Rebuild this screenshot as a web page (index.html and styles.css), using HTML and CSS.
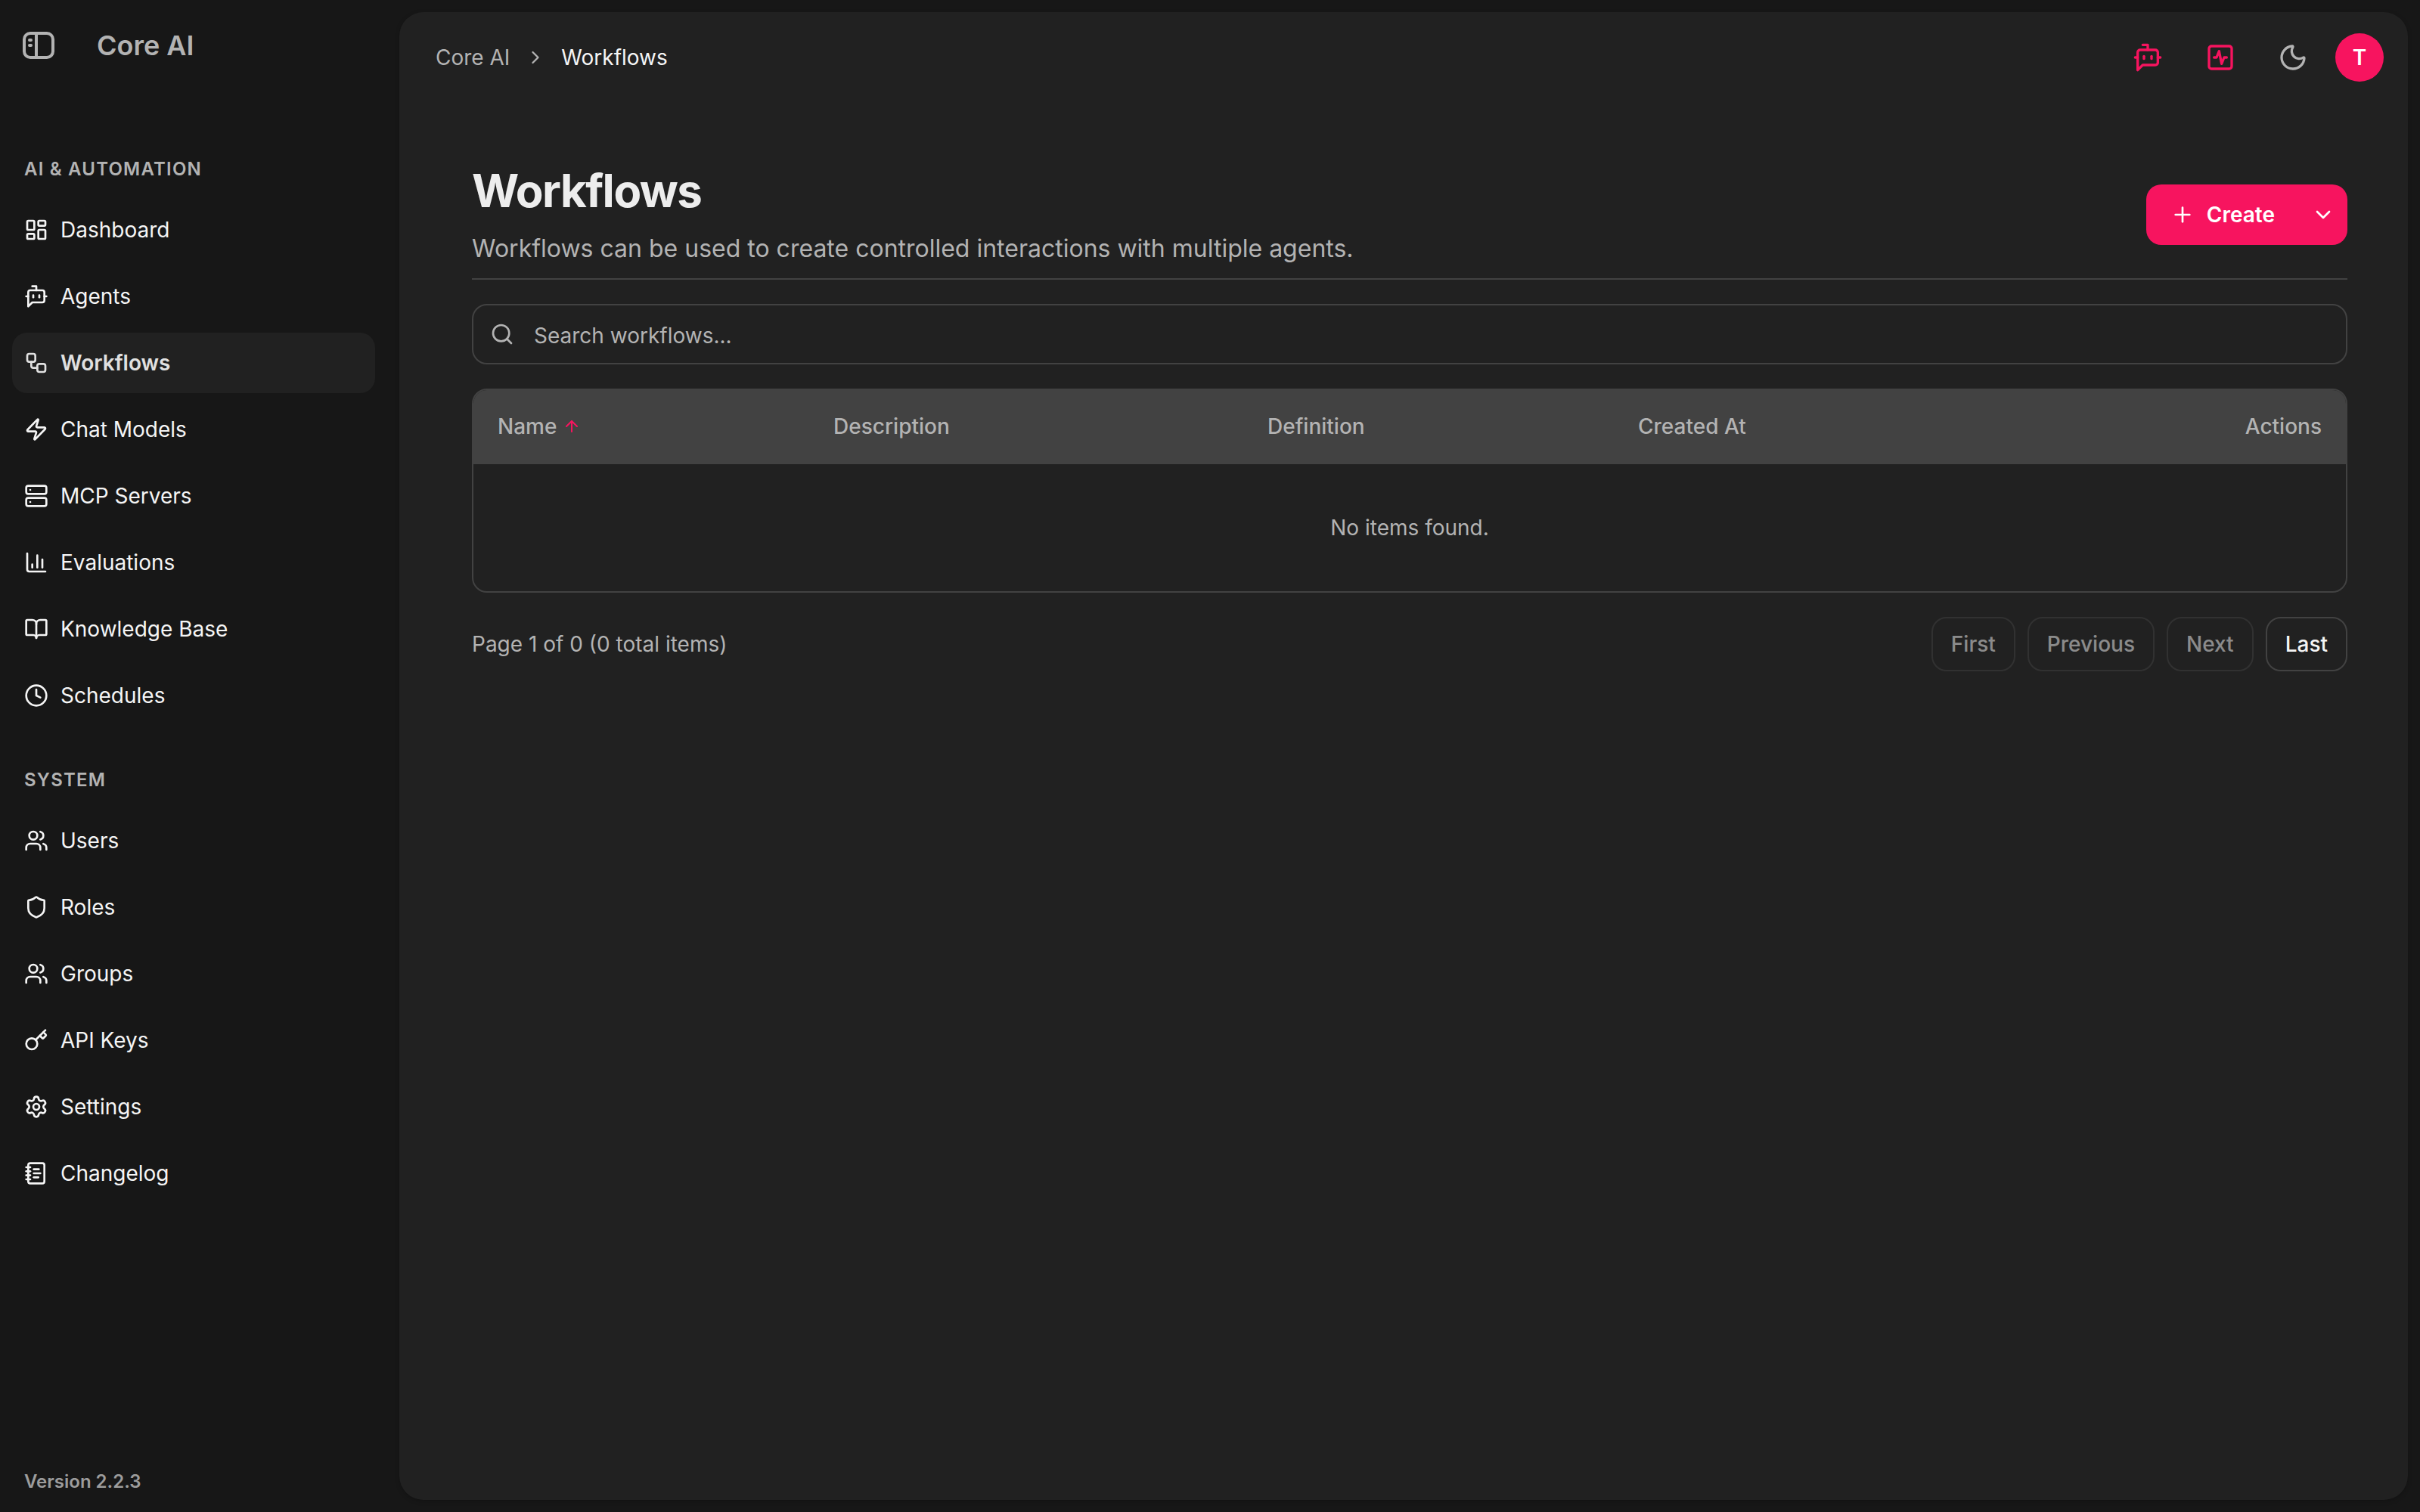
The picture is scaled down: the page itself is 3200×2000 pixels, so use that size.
FILE: index.html
```html
<!DOCTYPE html>
<html lang="en">
<head>
<meta charset="utf-8">
<title>Workflows - Core AI</title>
<link rel="stylesheet" href="styles.css">
</head>
<body>
<div class="app">
  <aside class="sidebar">
    <div class="brand">
      <button class="toggle" type="button" aria-label="Toggle sidebar">
        <svg class="toggle-icon" viewBox="0 0 42 36" fill="none" stroke="currentColor" stroke-width="4"><rect x="2" y="2" width="38" height="32" rx="8"/><path d="M18 2v32"/><path d="M9 11h2M9 18h2" stroke-linecap="round"/></svg>
      </button>
      <span class="brand-name">Core AI</span>
    </div>
    <nav class="nav" aria-label="Main">
      <section class="nav-group">
        <h2 class="nav-label">AI &amp; AUTOMATION</h2>
        <ul class="nav-list">
          <li><a class="nav-item" href="#"><svg class="icon" viewBox="0 0 24 24"><rect width="7" height="9" x="3" y="3" rx="1"/><rect width="7" height="5" x="14" y="3" rx="1"/><rect width="7" height="9" x="14" y="12" rx="1"/><rect width="7" height="5" x="3" y="16" rx="1"/></svg>Dashboard</a></li>
          <li><a class="nav-item" href="#"><svg class="icon" viewBox="0 0 24 24"><path d="M12 6V2H8"/><path d="m8 18-4 4V8a2 2 0 0 1 2-2h12a2 2 0 0 1 2 2v8a2 2 0 0 1-2 2Z"/><path d="M2 12h2"/><path d="M9 11v2"/><path d="M15 11v2"/><path d="M20 12h2"/></svg>Agents</a></li>
          <li><a class="nav-item active" href="#" aria-current="page"><svg class="icon" viewBox="0 0 24 24"><rect width="8" height="8" x="3" y="3" rx="2"/><path d="M7 11v4a2 2 0 0 0 2 2h4"/><rect width="8" height="8" x="13" y="13" rx="2"/></svg>Workflows</a></li>
          <li><a class="nav-item" href="#"><svg class="icon" viewBox="0 0 24 24"><path d="M4 14a1 1 0 0 1-.78-1.63l9.9-10.2a.5.5 0 0 1 .86.46l-1.92 6.02A1 1 0 0 0 13 10h7a1 1 0 0 1 .78 1.63l-9.9 10.2a.5.5 0 0 1-.86-.46l1.92-6.02A1 1 0 0 0 11 14z"/></svg>Chat Models</a></li>
          <li><a class="nav-item" href="#"><svg class="icon" viewBox="0 0 24 24"><rect width="20" height="8" x="2" y="2" rx="2"/><rect width="20" height="8" x="2" y="14" rx="2"/><path d="M6 6h.01"/><path d="M6 18h.01"/></svg>MCP Servers</a></li>
          <li><a class="nav-item" href="#"><svg class="icon" viewBox="0 0 24 24"><path d="M3 3v16a2 2 0 0 0 2 2h16"/><path d="M18 17V9"/><path d="M13 17V5"/><path d="M8 17v-3"/></svg>Evaluations</a></li>
          <li><a class="nav-item" href="#"><svg class="icon" viewBox="0 0 24 24"><path d="M12 7v14"/><path d="M3 18a1 1 0 0 1-1-1V4a1 1 0 0 1 1-1h5a4 4 0 0 1 4 4 4 4 0 0 1 4-4h5a1 1 0 0 1 1 1v13a1 1 0 0 1-1 1h-6a3 3 0 0 0-3 3 3 3 0 0 0-3-3z"/></svg>Knowledge Base</a></li>
          <li><a class="nav-item" href="#"><svg class="icon" viewBox="0 0 24 24"><circle cx="12" cy="12" r="10"/><path d="M12 6v6l4 2"/></svg>Schedules</a></li>
        </ul>
      </section>
      <section class="nav-group">
        <h2 class="nav-label">SYSTEM</h2>
        <ul class="nav-list">
          <li><a class="nav-item" href="#"><svg class="icon" viewBox="0 0 24 24"><path d="M16 21v-2a4 4 0 0 0-4-4H6a4 4 0 0 0-4 4v2"/><circle cx="9" cy="7" r="4"/><path d="M22 21v-2a4 4 0 0 0-3-3.87"/><path d="M16 3.13a4 4 0 0 1 0 7.75"/></svg>Users</a></li>
          <li><a class="nav-item" href="#"><svg class="icon" viewBox="0 0 24 24"><path d="M20 13c0 5-3.500 7.500-7.660 8.950a1 1 0 0 1-.67-.01C7.500 20.500 4 18 4 13V6a1 1 0 0 1 1-1c2 0 4.500-1.200 6.240-2.720a1.170 1.170 0 0 1 1.520 0C14.510 3.810 17 5 19 5a1 1 0 0 1 1 1z"/></svg>Roles</a></li>
          <li><a class="nav-item" href="#"><svg class="icon" viewBox="0 0 24 24"><path d="M16 21v-2a4 4 0 0 0-4-4H6a4 4 0 0 0-4 4v2"/><circle cx="9" cy="7" r="4"/><path d="M22 21v-2a4 4 0 0 0-3-3.87"/><path d="M16 3.13a4 4 0 0 1 0 7.75"/></svg>Groups</a></li>
          <li><a class="nav-item" href="#"><svg class="icon" viewBox="0 0 24 24"><path d="m15.500 7.500 2.300 2.300a1 1 0 0 0 1.400 0l2.100-2.100a1 1 0 0 0 0-1.400L19 4"/><path d="m21 2-9.600 9.600"/><circle cx="7.500" cy="15.500" r="5.500"/></svg>API Keys</a></li>
          <li><a class="nav-item" href="#"><svg class="icon" viewBox="0 0 24 24"><path d="M9.671 4.136a2.340 2.340 0 0 1 4.659 0 2.340 2.340 0 0 0 3.319 1.915 2.340 2.340 0 0 1 2.330 4.033 2.340 2.340 0 0 0 0 3.831 2.340 2.340 0 0 1-2.330 4.033 2.340 2.340 0 0 0-3.319 1.915 2.340 2.340 0 0 1-4.659 0 2.340 2.340 0 0 0-3.320-1.915 2.340 2.340 0 0 1-2.330-4.033 2.340 2.340 0 0 0 0-3.831A2.340 2.340 0 0 1 6.350 6.051a2.340 2.340 0 0 0 3.319-1.915"/><circle cx="12" cy="12" r="3"/></svg>Settings</a></li>
          <li><a class="nav-item" href="#"><svg class="icon" viewBox="0 0 24 24"><path d="M2 6h4"/><path d="M2 10h4"/><path d="M2 14h4"/><path d="M2 18h4"/><rect width="16" height="20" x="4" y="2" rx="2"/><path d="M9.500 8h5"/><path d="M9.500 12H16"/><path d="M9.500 16H14"/></svg>Changelog</a></li>
        </ul>
      </section>
    </nav>
    <p class="version">Version 2.2.3</p>
  </aside>

  <main class="main">
    <header class="topbar">
      <nav class="crumbs" aria-label="Breadcrumb">
        <a class="crumb" href="#">Core AI</a>
        <svg class="icon icon-sm" viewBox="0 0 24 24"><path d="m9 18 6-6-6-6"/></svg>
        <span class="crumb-current" aria-current="page">Workflows</span>
      </nav>
      <div class="tools">
        <button class="tool accent" type="button" aria-label="Assistant"><svg class="icon icon-lg" viewBox="0 0 24 24"><path d="M12 6V2H8"/><path d="m8 18-4 4V8a2 2 0 0 1 2-2h12a2 2 0 0 1 2 2v8a2 2 0 0 1-2 2Z"/><path d="M2 12h2"/><path d="M9 11v2"/><path d="M15 11v2"/><path d="M20 12h2"/></svg></button>
        <button class="tool accent" type="button" aria-label="Activity"><svg class="icon icon-lg" viewBox="0 0 24 24"><rect width="18" height="18" x="3" y="3" rx="2"/><path d="M17 12h-2l-2 5-2-10-2 5H7"/></svg></button>
        <button class="tool" type="button" aria-label="Dark theme"><svg class="icon icon-lg" viewBox="0 0 24 24"><path d="M20.985 12.486a9 9 0 1 1-9.473-9.472c.405-.022.617.46.402.803a6 6 0 0 0 8.268 8.268c.344-.215.825-.004.803.401"/></svg></button>
        <button class="avatar" type="button" aria-label="Account">T</button>
      </div>
    </header>

    <div class="content">
      <div class="page-head">
        <div class="page-title">
          <h1 class="title">Workflows</h1>
          <p class="subtitle">Workflows can be used to create controlled interactions with multiple agents.</p>
        </div>
        <div class="split">
          <button class="create" type="button"><svg class="icon" viewBox="0 0 24 24"><path d="M5 12h14"/><path d="M12 5v14"/></svg>Create</button>
          <button class="create-more" type="button" aria-label="More create options"><svg class="icon" viewBox="0 0 24 24"><path d="m6 9 6 6 6-6"/></svg></button>
        </div>
      </div>

      <label class="search">
        <svg class="icon" viewBox="0 0 24 24"><circle cx="11" cy="11" r="8"/><path d="m21 21-4.300-4.300"/></svg>
        <input class="search-input" type="text" placeholder="Search workflows..." aria-label="Search workflows">
      </label>

      <div class="table-card">
        <table class="table">
          <colgroup><col class="col-name"><col class="col-desc"><col class="col-def"><col class="col-created"><col></colgroup>
          <thead>
            <tr>
              <th scope="col" aria-sort="ascending"><span class="sort">Name<svg class="icon icon-xs accent" viewBox="0 0 24 24"><path d="m5 12 7-7 7 7"/><path d="M12 19V5"/></svg></span></th>
              <th scope="col">Description</th>
              <th scope="col">Definition</th>
              <th scope="col">Created At</th>
              <th scope="col" class="end">Actions</th>
            </tr>
          </thead>
          <tbody>
            <tr><td class="empty" colspan="5">No items found.</td></tr>
          </tbody>
        </table>
      </div>

      <div class="pager">
        <p class="pager-info">Page 1 of 0 (0 total items)</p>
        <div class="pager-buttons">
          <button class="page-btn" type="button" disabled>First</button>
          <button class="page-btn" type="button" disabled>Previous</button>
          <button class="page-btn" type="button" disabled>Next</button>
          <button class="page-btn" type="button">Last</button>
        </div>
      </div>
    </div>
  </main>
</div>
</body>
</html>
```

FILE: styles.css
```css
:root {
  --bg: #171717;
  --surface: #212121;
  --border: #424242;
  --text: #f5f5f5;
  --muted: #b3b3b3;
  --accent: #f7145f;
}

* { box-sizing: border-box; margin: 0; padding: 0; }

body {
  background: var(--bg);
  color: var(--text);
  font-family: Inter, "Liberation Sans", sans-serif;
  font-size: 28px;
  line-height: 40px;
  font-optical-sizing: none;
}

button, input { font: inherit; color: inherit; background: none; border: 0; }
a { color: inherit; text-decoration: none; }
ul { list-style: none; }

.icon {
  width: 32px;
  height: 32px;
  flex: none;
  fill: none;
  stroke: currentColor;
  stroke-width: 2;
  stroke-linecap: round;
  stroke-linejoin: round;
}
.icon-xs { width: 24px; height: 24px; }
.icon-sm { width: 28px; height: 28px; }
.icon-lg { width: 40px; height: 40px; }
.accent { color: var(--accent); }

.app {
  display: grid;
  grid-template-columns: 512px 1fr;
  gap: 16px;
  min-height: 100vh;
  padding: 16px 16px 16px 0;
}

/* Sidebar */
.sidebar { display: flex; flex-direction: column; padding: 0 16px; }
.brand {
  display: flex;
  align-items: center;
  gap: 56px;
  height: 88px;
  padding-left: 14px;
  color: var(--muted);
}
.toggle { display: flex; }
.toggle-icon { width: 42px; height: 36px; }
.brand-name { font-size: 36px; font-weight: 600; }
.nav { display: flex; flex-direction: column; gap: 56px; padding-top: 104px; }
.nav-group { display: flex; flex-direction: column; gap: 24px; }
.nav-label {
  padding-left: 16px;
  color: var(--muted);
  font-size: 24px;
  font-weight: 600;
  line-height: 32px;
  letter-spacing: 0.05em;
}
.nav-list { display: flex; flex-direction: column; gap: 8px; }
.nav-item {
  display: flex;
  align-items: center;
  gap: 16px;
  padding: 20px 16px;
  border-radius: 20px;
}
.nav-item.active { background: var(--surface); color: #e0e0e0; font-weight: 600; }
.version {
  margin-top: auto;
  padding-left: 16px;
  color: #9c9c9c;
  font-size: 24px;
  font-weight: 600;
  line-height: 32px;
  padding-bottom: 8px;
}

/* Main panel */
.main {
  background: var(--surface);
  border-radius: 32px;
  box-shadow: 0 2px 6px rgba(0, 0, 0, 0.2);
}
.topbar {
  display: flex;
  align-items: center;
  justify-content: space-between;
  height: 120px;
  padding: 0 32px 0 48px;
}
.crumbs { display: flex; align-items: center; gap: 20px; color: var(--muted); }
.crumb-current { color: var(--text); }
.tools { display: flex; align-items: center; gap: 16px; }
.tool { display: flex; padding: 20px; }
.tool:not(.accent) { color: var(--muted); }
.avatar {
  width: 64px;
  height: 64px;
  border-radius: 50%;
  background: var(--accent);
  color: #fff;
  font-weight: 600;
}

.content {
  display: flex;
  flex-direction: column;
  gap: 32px;
  padding: 80px 80px 80px 96px;
}
.page-head {
  display: flex;
  align-items: center;
  justify-content: space-between;
  padding-bottom: 16px;
  border-bottom: 2px solid var(--border);
}
.page-title { display: flex; flex-direction: column; gap: 16px; }
.title {
  color: #ededed;
  font-size: 60px;
  font-weight: 700;
  line-height: 72px;
  letter-spacing: -0.025em;
}
.subtitle { padding-top: 2px; color: var(--muted); font-size: 32px; line-height: 46px; }
.split {
  display: flex;
  overflow: hidden;
  border-radius: 20px;
  background: var(--accent);
  color: #fff;
}
.create {
  display: flex;
  align-items: center;
  gap: 16px;
  padding: 20px 32px;
  font-weight: 600;
}
.create-more { display: flex; align-items: center; padding: 0 16px; }

.search {
  display: flex;
  align-items: center;
  gap: 26px;
  height: 80px;
  padding: 0 22px;
  border: 2px solid var(--border);
  border-radius: 20px;
  color: var(--muted);
}
.search-input { flex: 1; padding-top: 4px; outline: 0; }
.search-input::placeholder { color: var(--muted); opacity: 1; }

.table-card { overflow: hidden; border: 2px solid var(--border); border-radius: 20px; }
.table { width: 100%; border-spacing: 0; table-layout: fixed; color: var(--muted); }
.col-name { width: 444px; }
.col-desc { width: 574px; }
.col-def { width: 490px; }
.col-created { width: 490px; }
th {
  height: 98px;
  padding: 0 32px;
  border-bottom: 2px solid var(--border);
  background: var(--border);
  font-weight: 500;
  text-align: left;
}
.sort { display: flex; align-items: center; gap: 8px; }
.end { text-align: right; }
.empty { padding: 64px 32px; text-align: center; }

.pager { display: flex; align-items: center; justify-content: space-between; color: var(--muted); }
.pager-buttons { display: flex; gap: 16px; }
.page-btn {
  padding: 14px 24px;
  border: 2px solid var(--border);
  border-radius: 20px;
  color: var(--text);
  font-weight: 500;
}
.page-btn:disabled { opacity: 0.5; }
```
